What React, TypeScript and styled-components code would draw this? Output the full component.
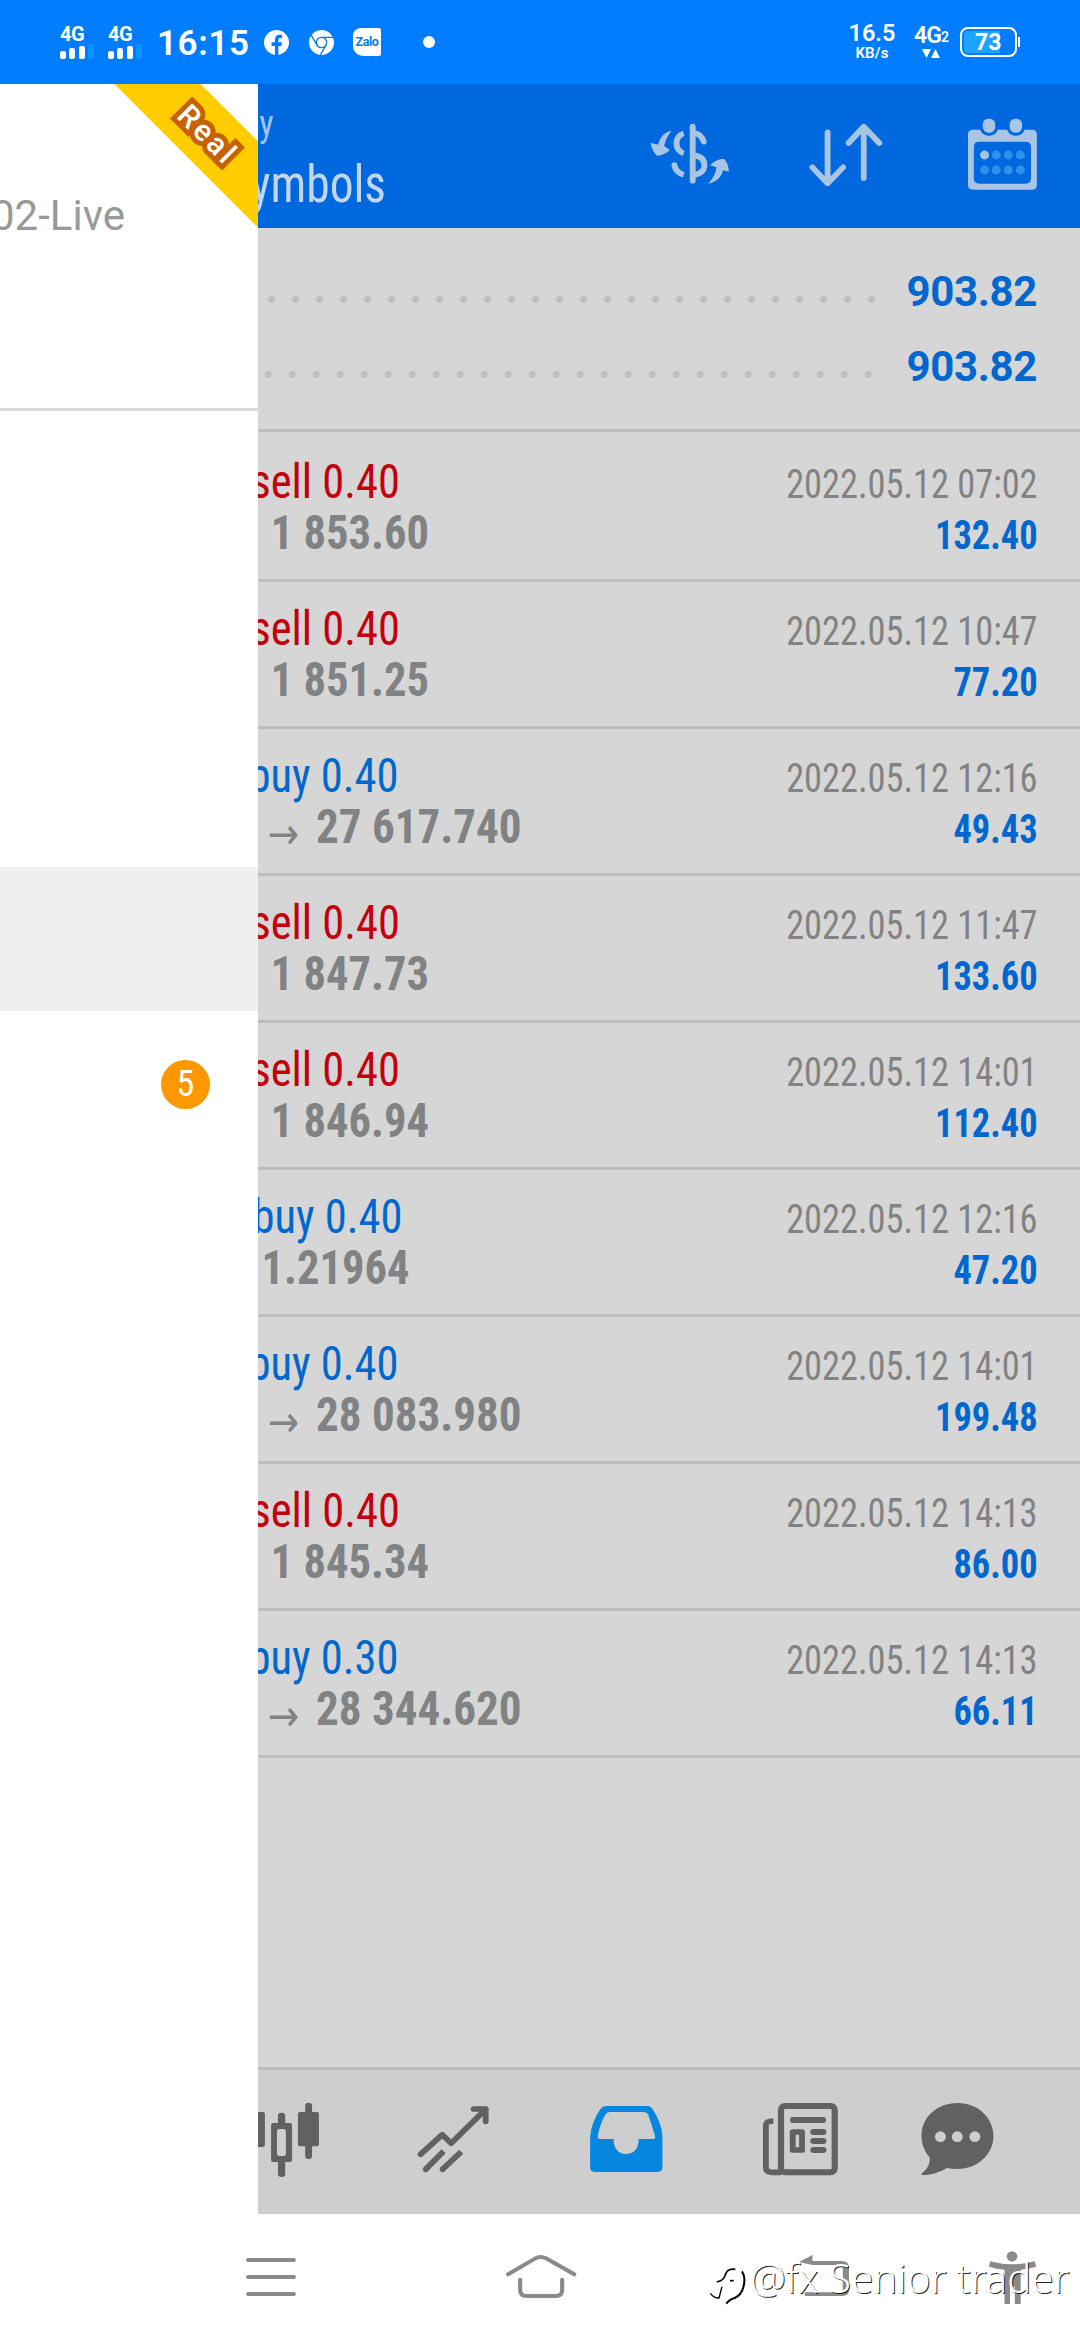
import React from "react";
import styled, { createGlobalStyle } from "styled-components";

const Global = createGlobalStyle`
  * { box-sizing: border-box; }
  body { margin: 0; background: #fff; font-family: Roboto, "Liberation Sans", sans-serif; }
  svg { display: block; flex: none; }
`;

const condensed = `
  font-family: "Roboto Condensed", Roboto, "Liberation Sans", sans-serif;
  font-stretch: 75%;
`;

const Screen = styled.div`
  position: relative;
  width: 1080px;
  height: 2340px;
  display: flex;
  flex-direction: column;
  overflow: hidden;
  background: #fff;
`;

/* ---------- status bar ---------- */

const StatusBar = styled.header`
  height: 84px;
  flex: none;
  display: flex;
  align-items: flex-start;
  padding: 25px 60px 0 60px;
  background: #007dff;
  color: #fff;
`;
const Signal = styled.div`
  width: 48px;
  height: 32px;
  flex: none;
  display: flex;
  flex-direction: column;
  justify-content: space-between;
  font-size: 20px;
  line-height: 19px;
  font-weight: 700;
  letter-spacing: -0.5px;
`;
const Bars = styled.div`
  display: flex;
  align-items: flex-end;
  gap: 3.4px;
`;
const Bar = styled.i<{ $h: number; $dim?: boolean }>`
  width: 6px;
  height: ${(p) => p.$h}px;
  border-radius: 2px;
  background: ${(p) => (p.$dim ? "#0d92ff" : "#fff")};
`;
const Clock = styled.div`
  width: 108px;
  flex: none;
  padding-left: 1px;
  font-size: 35px;
  line-height: 37px;
  font-weight: 600;
  letter-spacing: 0.6px;
`;
const Notices = styled.div`
  display: flex;
  align-items: center;
  height: 34px;
`;
const Zalo = styled.div`
  width: 28px;
  height: 28px;
  margin: 0 42px 0 19px;
  border-radius: 8px 2px 2px 10px;
  background: #fff;
  color: #0a7cdc;
  font-size: 12.5px;
  line-height: 27px;
  font-weight: 700;
  text-align: center;
  letter-spacing: -0.4px;
`;
const Dot = styled.i`
  width: 12px;
  height: 12px;
  border-radius: 50%;
  background: #fff;
`;
const Speed = styled.div`
  margin-left: auto;
  width: 50px;
  text-align: center;
  font-size: 23.5px;
  line-height: 17px;
  font-weight: 600;
  small { display: block; font-size: 15px; line-height: 23px; letter-spacing: 0.2px; }
`;
const Network = styled.div`
  width: 36px;
  margin: 1px 11px 0 16px;
  display: flex;
  flex-direction: column;
  align-items: center;
  gap: 4px;
`;
const NetworkType = styled.div`
  height: 19px;
  display: flex;
  align-items: flex-end;
  font-size: 23px;
  line-height: 19px;
  font-weight: 600;
  letter-spacing: -1px;
  small { font-size: 14px; line-height: 15px; }
`;
const Battery = styled.div`
  width: 57px;
  height: 30px;
  margin-top: 2px;
  padding: 2px;
  border: 2px solid #fff;
  border-radius: 8px;
`;
const Charge = styled.div`
  width: 36px;
  height: 22px;
  border-radius: 4px 0 0 4px;
  background: #1fa3ff;
  padding-left: 11px;
  font-size: 23px;
  line-height: 23px;
  font-weight: 700;
`;
const Nub = styled.i`
  width: 2px;
  height: 10px;
  margin: 12px 0 0 1px;
  background: #fff;
`;

/* ---------- drawer ---------- */

const Body = styled.div`
  display: flex;
  height: 2130px;
  flex: none;
`;
const Drawer = styled.aside`
  width: 258px;
  flex: none;
  display: flex;
  flex-direction: column;
  background: #fff;
  overflow: hidden;
`;
const Account = styled.div`
  position: relative;
  height: 327px;
  border-bottom: 3px solid #d9d9d9;
  padding-top: 107px;
`;
const Server = styled.div`
  width: 125px;
  display: flex;
  justify-content: flex-end;
  overflow: hidden;
  white-space: nowrap;
  color: #999;
  font-size: 42px;
  line-height: 50px;
`;
const Ribbon = styled.div`
  position: absolute;
  top: 20px;
  left: 78px;
  width: 260px;
  height: 61px;
  transform: rotate(45deg);
  background: #fc0;
  display: flex;
  align-items: center;
  justify-content: center;
  color: #fff;
  font-size: 30px;
  font-weight: 500;
  letter-spacing: 3px;
  -webkit-text-stroke: 10px #c66200;
  paint-order: stroke fill;
`;
const MenuItem = styled.div<{ $active?: boolean; $h: number }>`
  height: ${(p) => p.$h}px;
  display: flex;
  align-items: center;
  justify-content: flex-end;
  padding-right: 48px;
  background: ${(p) => (p.$active ? "#efefef" : "transparent")};
`;
const Count = styled.span`
  width: 49px;
  height: 49px;
  border-radius: 50%;
  background: #ff9800;
  color: #fff;
  text-align: center;
  ${condensed}
  font-size: 36px;
  line-height: 48px;
`;

/* ---------- history page ---------- */

const Main = styled.main`
  width: 822px;
  display: flex;
  flex-direction: column;
  background: #d6d6d6;
  overflow: hidden;
`;
const TopBar = styled.div`
  height: 144px;
  flex: none;
  display: flex;
  align-items: flex-start;
  padding: 34px 43px 0 0;
  background: #0068de;
`;
const Titles = styled.div`
  flex: 1;
  display: flex;
  flex-direction: column;
  gap: 7px;
  margin-top: -18px;
  ${condensed}
  white-space: nowrap;
`;
const TitleLine = styled.div<{ $size: number; $w: number; $lh: number; $color: string }>`
  width: ${(p) => p.$w}px;
  display: flex;
  justify-content: flex-end;
  font-size: ${(p) => p.$size}px;
  line-height: ${(p) => p.$lh}px;
  color: ${(p) => p.$color};
  transform: scaleX(0.93);
  transform-origin: right;
`;
const Tools = styled.div`
  display: flex;
`;
const ToolGap = styled.i<{ $w: number }>`
  width: ${(p) => p.$w}px;
`;
const Summary = styled.section`
  padding: 26px 43px 25px 0;
  border-bottom: 3px solid #bdbdbd;
  margin-bottom: 3px;
`;
const SummaryRow = styled.div`
  height: 75px;
  display: flex;
  justify-content: space-between;
  color: #0067cf;
  font-size: 42px;
  line-height: 75px;
  font-weight: 700;
  letter-spacing: -0.35px;
`;
const Leader = styled.i<{ $x: number }>`
  width: 618px;
  height: 75px;
  background: radial-gradient(circle at 12px 45.3px, #bfbfbf 3.2px, transparent 4px) ${(p) => p.$x}px 0 / 24px 75px;
`;
const Row = styled.article`
  height: 147px;
  flex: none;
  display: flex;
  justify-content: space-between;
  padding-right: 42px;
  border-bottom: 3px solid #bdbdbd;
  ${condensed}
  line-height: 51px;
  white-space: nowrap;
`;
const Left = styled.div`
  padding-top: 21px;
  font-size: 48px;
`;
const Line = styled.div<{ $end: number; $color: string; $bold?: boolean; $scale?: number }>`
  width: ${(p) => p.$end - 258}px;
  height: 51px;
  display: flex;
  justify-content: flex-end;
  color: ${(p) => p.$color};
  font-weight: ${(p) => (p.$bold ? 700 : 400)};
  transform: scaleX(${(p) => p.$scale ?? 0.928});
  transform-origin: right;
`;
const Arrow = styled.span`
  font-family: "DejaVu Sans", sans-serif;
  font-size: 44px;
  line-height: 65px;
  font-weight: 400;
  margin-right: 18px;
`;
const Right = styled.div`
  padding-top: 24.4px;
  font-size: 40px;
  text-align: right;
  color: #828282;
  transform: scaleX(0.909);
  transform-origin: right;
  b { display: block; color: #0067cf; }
`;
const Tabs = styled.nav`
  height: 147px;
  margin-top: auto;
  flex: none;
  display: flex;
  border-top: 3px solid #bdbdbd;
  background: #cecece;
  padding-top: 30px;
`;
const Tab = styled.div<{ $w: number; $start?: boolean }>`
  width: ${(p) => p.$w}px;
  display: flex;
  justify-content: ${(p) => (p.$start ? "flex-start" : "center")};
`;

/* ---------- system navigation ---------- */

const SystemNav = styled.footer`
  height: 126px;
  flex: none;
  display: grid;
  grid-template-columns: 260px 293px 191px 48px;
  align-items: start;
  padding: 36px 43px 0 245px;
  background: #fff;
`;
const Watermark = styled.div`
  position: absolute;
  left: 710px;
  top: 2265px;
  display: flex;
  align-items: flex-start;
  color: #fff;
  font-family: "Noto Sans", sans-serif;
  font-size: 40.3px;
  font-weight: 300;
  line-height: 50px;
  white-space: nowrap;
  text-shadow: 1px 1px 0.3px rgba(0, 0, 0, 0.85);
`;
const MarkText = styled.span`
  margin-top: -12px;
`;

/* Draws a region of the icon sheet: sheet units are 2.904 per px across and 3 per px down. */
const Glyph = ({ x, y, w, h, children }: { x: number; y: number; w: number; h: number; children: React.ReactNode }) => (
  <svg width={w / 2.904} height={h / 3} viewBox={`${x} ${y} ${w} ${h}`} preserveAspectRatio="none">
    {children}
  </svg>
);

const FacebookIcon = () => (
  <svg width="25" height="25" viewBox="0 0 25 25">
    <circle cx="12.5" cy="12.5" r="12.5" fill="#fff" />
    <path d="M11 25v-9H7.5v-3.7H11V9.6c0-3.2 1.9-4.9 4.7-4.9 1.1 0 2 .1 2.3.2v3.2h-1.6c-1.6 0-2 .8-2 2v2.2h3.5l-.5 3.7h-3v9z" fill="#007dff" />
  </svg>
);
const ChromeMark = styled.svg`
  margin-left: 20px;
`;
const ChromeIcon = () => (
  <ChromeMark width="25" height="25" viewBox="0 0 25 25">
    <circle cx="12.5" cy="12.5" r="12.5" fill="#fff" />
    <g fill="none" stroke="#0a7ce0" strokeWidth="1.3">
      <circle cx="12.5" cy="12.5" r="5.2" />
      <path d="M12.5 7.3H24M8 15.1L2.2 5.2M17 15.1l-5.6 9.8" />
    </g>
  </ChromeMark>
);

const light = "#a9c5e6";
const DollarIcon = () => (
  <Glyph x={320} y={355} w={232} h={220}>
    <g fill="none" stroke={light} strokeWidth="17">
      <path d="M444 381V543" strokeLinecap="round" />
      <path d="M418 401C403 406 397 418 397 431C397 446 404 456 418 461" />
      <path d="M448 400C464 402 472 412 476 426" strokeLinecap="round" />
      <path d="M448 467C470 470 478 482 478 496C478 512 468 522 448 526" />
      <path d="M391 497C393 510 401 520 418 525" />
    </g>
    <circle cx="391" cy="496" r="8.5" fill={light} />
    <path d="M383 393C370 410 362 427 362 440L378 451C367 462 354 467 341 468C331 460 324 446 322 429L344 435C348 415 360 397 383 393Z" fill={light} />
    <path d="M489 552C504 535 512 519 513 503L495 497C505 485 520 477 536 478C544 488 549 502 549 516L532 512C527 534 511 549 489 552Z" fill={light} />
  </Glyph>
);
const SortIcon = () => (
  <Glyph x={782} y={355} w={213} h={220}>
    <g fill="none" stroke={light} strokeWidth="17" strokeLinecap="round" strokeLinejoin="round">
      <path d="M836 398V550M792 503L836 551L881 503" />
      <path d="M941 535V382M897 430L941 381L986 430" />
    </g>
  </Glyph>
);
const CalendarIcon = () => (
  <Glyph x={1243} y={355} w={200} h={220}>
    <path fillRule="evenodd" fill={light} d="M1257 390H1429Q1443 390 1443 404V556Q1443 570 1429 570H1257Q1243 570 1243 556V404Q1243 390 1257 390ZM1276 426Q1260 426 1260 442V536Q1260 552 1276 552H1410Q1426 552 1426 536V442Q1426 426 1410 426Z" />
    {[1286, 1364].map((x) => (
      <rect key={x} x={x} y="357" width="36" height="42" rx="16" fill={light} stroke="#0068de" strokeWidth="18" paintOrder="stroke" />
    ))}
    {[466, 511].map((cy, r) =>
      [1291, 1325, 1360, 1395].map((cx, c) => (
        <circle key={`${r}${c}`} cx={cx} cy={cy} r="13.2" fill={r + c === 0 ? light : "#2f92ea"} />
      ))
    )}
  </Glyph>
);

const ink = "#616161";
const CandlesIcon = () => (
  <Glyph x={749} y={120} w={190} h={235}>
    <g fill={ink}>
      <rect x="708" y="156" width="61" height="105" rx="6" />
      <rect x="865" y="156" width="61" height="103" rx="6" />
      <rect x="886" y="128" width="20" height="169" rx="10" />
      <rect x="807" y="158" width="21" height="40" rx="10" />
      <rect x="807" y="295" width="21" height="56" rx="10" />
      <path fillRule="evenodd" d="M793 189H842Q848 189 848 195V300Q848 306 842 306H793Q787 306 787 300V195Q787 189 793 189ZM811 207Q804 207 804 214V281Q804 288 811 288H823Q830 288 830 281V214Q830 207 823 207Z" />
    </g>
  </Glyph>
);
const TrendIcon = () => (
  <Glyph x={1200} y={120} w={234} h={235}>
    <g fill="none" stroke={ink} strokeWidth="17">
      <path d="M1222 283L1285 224L1311 250L1411 148" strokeLinecap="round" strokeLinejoin="round" />
      <path d="M1376 147H1411V184" strokeLinecap="round" strokeLinejoin="round" />
      <path d="M1237 328L1289 274M1286 328L1340 275" />
    </g>
    <circle cx="1237" cy="328" r="8.5" fill={ink} />
    <circle cx="1286" cy="328" r="8.5" fill={ink} />
  </Glyph>
);
const InboxIcon = () => (
  <Glyph x={134} y={120} w={234} h={235}>
    <path
      fill="#0586df"
      fillRule="evenodd"
      d="M192 138H312Q322 138 328 148Q356 195 356 232V322Q356 336 342 336H160Q146 336 146 322V232Q148 190 176 147Q182 138 192 138ZM203 156Q194 156 190 164Q174 193 168 229Q167 237 175 237H214C214 268 230 282 250 282C272 282 287 268 287 237H328Q336 237 335 229L315 164Q311 156 302 156Z"
    />
  </Glyph>
);
const NewsIcon = () => (
  <Glyph x={638} y={120} w={234} h={235}>
    <g fill="none" stroke={ink}>
      <rect x="699" y="138" width="156" height="199" rx="12" strokeWidth="18" />
      <path d="M677 183Q655 183 655 196V322Q655 337 672 337H700" strokeWidth="17" />
      <path d="M734 180H821M793 216H822M793 243H822M793 270H822" strokeWidth="18" strokeLinecap="round" />
      <rect x="733" y="216" width="27" height="54" strokeWidth="17" strokeLinejoin="round" />
    </g>
  </Glyph>
);
const ChatIcon = () => (
  <Glyph x={1096} y={120} w={234} h={235}>
    <path fill={ink} d="M1213 129C1275 129 1318 175 1318 228C1318 283 1272 327 1213 327Q1197 327 1183 324C1162 337 1138 345 1112 345Q1107 343 1112 338C1128 326 1134 308 1133 293C1118 275 1109 252 1109 228C1109 172 1154 129 1213 129Z" />
    {[1164, 1213, 1264].map((cx) => (
      <circle key={cx} cx={cx} cy="230" r="16" fill="#cecece" />
    ))}
  </Glyph>
);

const grey = "#8a8a8a";
const MenuKey = () => (
  <Glyph x={711} y={570} w={150} h={170}>
    <path d="M720 600H853M720 651H853M720 702H853" stroke={grey} strokeWidth="12" strokeLinecap="round" />
  </Glyph>
);
const HomeKey = () => (
  <Glyph x={1466} y={570} w={210} h={170}>
    <g fill="none" stroke={grey} strokeWidth="12" strokeLinecap="round">
      <path d="M1475 643L1553 596Q1568 586 1585 595L1667 643" />
      <path d="M1510 659V690Q1510 708 1528 708H1614Q1632 708 1632 690V659" />
    </g>
  </Glyph>
);
const BackKey = () => (
  <Glyph x={750} y={570} w={150} h={170}>
    <path d="M753 606L792 585V603H876Q898 603 898 622V690Q898 708 878 708H770V697H880V615H792Z" fill={grey} />
  </Glyph>
);
const AccessKey = () => (
  <Glyph x={1304} y={570} w={138} h={170}>
    <circle cx="1371" cy="589" r="15.5" fill={grey} />
    <path d="M1307 604Q1372 622 1437 604L1441 620Q1415 627 1396 629V732H1379V680H1365V732H1349V629Q1325 627 1304 620Z" fill={grey} />
  </Glyph>
);
const MarkLogo = () => (
  <svg width="40" height="44" viewBox="30 75 120 132">
    <g fill="none" stroke="#000" strokeWidth="5">
      <path d="M106 88Q82 84 76 104Q72 122 50 126" />
      <path d="M126 94Q138 112 130 142Q124 166 104 174Q88 178 79 191" strokeWidth="6" />
      <path d="M31 160Q42 175 57 174L66 140" strokeWidth="4" />
      <path d="M90 122H101" />
    </g>
  </svg>
);

type Deal = { side: "sell" | "buy"; lot: string; price: string; arrow?: boolean; time: string; profit: string; e1: number; e2: number };
const deals: Deal[] = [
  { side: "sell", lot: "0.40", price: "1 853.60", time: "2022.05.12 07:02", profit: "132.40", e1: 400, e2: 429 },
  { side: "sell", lot: "0.40", price: "1 851.25", time: "2022.05.12 10:47", profit: "77.20", e1: 400, e2: 429 },
  { side: "buy", lot: "0.40", price: "27 617.740", arrow: true, time: "2022.05.12 12:16", profit: "49.43", e1: 398.5, e2: 521.5 },
  { side: "sell", lot: "0.40", price: "1 847.73", time: "2022.05.12 11:47", profit: "133.60", e1: 400, e2: 429 },
  { side: "sell", lot: "0.40", price: "1 846.94", time: "2022.05.12 14:01", profit: "112.40", e1: 400, e2: 429 },
  { side: "buy", lot: "0.40", price: "1.21964", time: "2022.05.12 12:16", profit: "47.20", e1: 402.5, e2: 409.5 },
  { side: "buy", lot: "0.40", price: "28 083.980", arrow: true, time: "2022.05.12 14:01", profit: "199.48", e1: 398.5, e2: 521.5 },
  { side: "sell", lot: "0.40", price: "1 845.34", time: "2022.05.12 14:13", profit: "86.00", e1: 400, e2: 429 },
  { side: "buy", lot: "0.30", price: "28 344.620", arrow: true, time: "2022.05.12 14:13", profit: "66.11", e1: 398.5, e2: 521.5 },
];

const SignalMeter = () => (
  <Signal>
    4G
    <Bars>
      <Bar $h={8} />
      <Bar $h={11} />
      <Bar $h={13} />
      <Bar $h={15} $dim />
    </Bars>
  </Signal>
);

export default function App() {
  return (
    <>
      <Global />
      <Screen>
        <StatusBar>
          <SignalMeter />
          <SignalMeter />
          <Clock>16:15</Clock>
          <Notices>
            <FacebookIcon />
            <ChromeIcon />
            <Zalo>Zalo</Zalo>
            <Dot />
          </Notices>
          <Speed>
            16.5<small>KB/s</small>
          </Speed>
          <Network>
            <NetworkType>
              4G<small>2</small>
            </NetworkType>
            <svg width="18" height="9" viewBox="0 0 18 9">
              <path d="M0 0H9L4.5 9ZM9 9H18L13.5 0Z" fill="#fff" />
            </svg>
          </Network>
          <Battery>
            <Charge>73</Charge>
          </Battery>
          <Nub />
        </StatusBar>

        <Body>
          <Drawer>
            <Account>
              <Server>02-Live</Server>
              <Ribbon>Real</Ribbon>
            </Account>
            <MenuItem $h={456} />
            <MenuItem $h={144} $active />
            <MenuItem $h={146}>
              <Count>5</Count>
            </MenuItem>
          </Drawer>

          <Main>
            <TopBar>
              <Titles>
                <TitleLine $size={37} $w={15.5} $lh={48} $color="#a3c4ec">y</TitleLine>
                <TitleLine $size={51} $w={128} $lh={60} $color="#c2d6ee">ymbols</TitleLine>
              </Titles>
              <Tools>
                <DollarIcon />
                <ToolGap $w={80} />
                <SortIcon />
                <ToolGap $w={85.4} />
                <CalendarIcon />
              </Tools>
            </TopBar>
            <Summary>
              <SummaryRow>
                <Leader $x={1.4} />
                903.82
              </SummaryRow>
              <SummaryRow>
                <Leader $x={-1.7} />
                903.82
              </SummaryRow>
            </Summary>
            {deals.map((d, i) => (
              <Row key={i}>
                <Left>
                  <Line $end={d.e1} $color={d.side === "sell" ? "#c4000c" : "#0067cf"}>
                    {d.side} {d.lot}
                  </Line>
                  <Line $end={d.e2} $color="#808283" $bold $scale={d.arrow ? 0.938 : undefined}>
                    {d.arrow && <Arrow>→</Arrow>}
                    {d.price}
                  </Line>
                </Left>
                <Right>
                  {d.time}
                  <b>{d.profit}</b>
                </Right>
              </Row>
            ))}
            <Tabs>
              <Tab $w={109} $start><CandlesIcon /></Tab>
              <Tab $w={173}><TrendIcon /></Tab>
              <Tab $w={173}><InboxIcon /></Tab>
              <Tab $w={174}><NewsIcon /></Tab>
              <Tab $w={141}><ChatIcon /></Tab>
            </Tabs>
          </Main>
        </Body>

        <SystemNav>
          <MenuKey />
          <HomeKey />
          <BackKey />
          <AccessKey />
        </SystemNav>
        <Watermark>
          <MarkLogo />
          <MarkText>@fx Senior trader</MarkText>
        </Watermark>
      </Screen>
    </>
  );
}
